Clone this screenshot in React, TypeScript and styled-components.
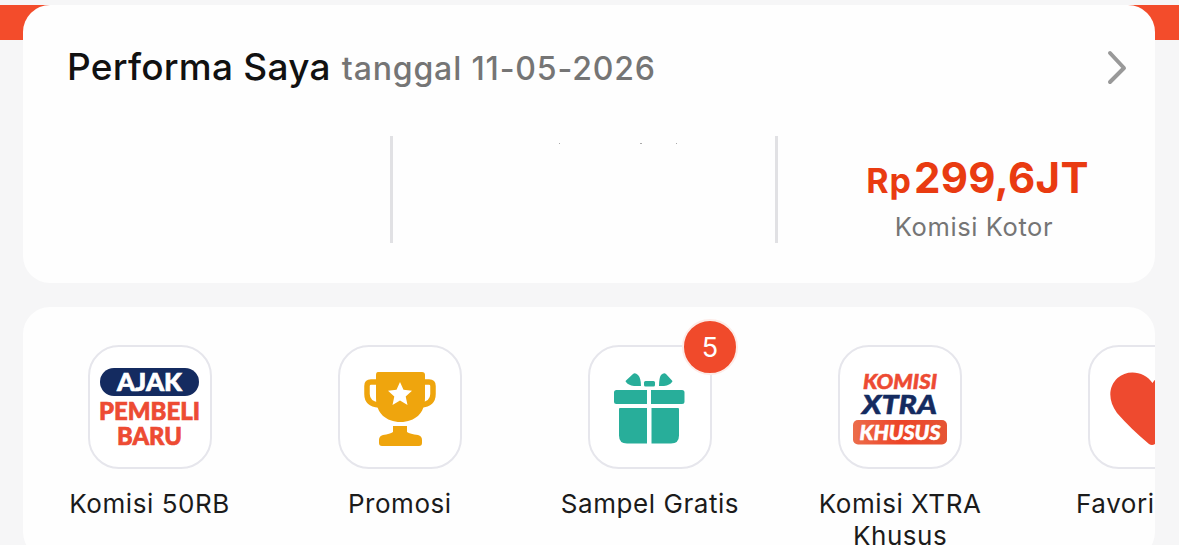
import { FC, ReactNode } from 'react';
import styled, { createGlobalStyle } from 'styled-components';

const GlobalStyle = createGlobalStyle`
  * {
    box-sizing: border-box;
  }
  body {
    margin: 0;
    background: #f6f6f7;
    font-family: Inter, 'Liberation Sans', sans-serif;
    overflow: hidden;
  }
`;

const Page = styled.main`
  height: 545px;
  padding: 5px 24px 0 23px;
  overflow: hidden;
  background: linear-gradient(
    #f6f6f7 5px,
    #f34c2b 5px,
    #f34c2b 40px,
    #f6f6f7 40px
  );
`;

const Card = styled.section`
  background: #fefefe;
  border-radius: 27px;
  overflow: hidden;
`;

const PerformanceCard = styled(Card)`
  height: 278px;
  margin-bottom: 24px;
`;

const MenuCard = styled(Card)`
  height: 252px;
  display: flex;
  padding: 38px 0 0 1.5px;
`;

const Header = styled.header`
  display: flex;
  align-items: center;
  justify-content: space-between;
  height: 124px;
  padding: 0 28px 0 44px;
`;

const Heading = styled.div`
  display: flex;
  align-items: baseline;
  white-space: nowrap;
`;

const Title = styled.h1`
  margin: 0;
  color: #111;
  font-size: 37px;
  font-weight: 500;
  line-height: 48px;
  letter-spacing: 0.25px;
`;

const DateLabel = styled.span`
  margin-left: 11px;
  color: #757575;
  font-size: 32px;
  font-weight: 450;
  letter-spacing: 0.85px;
`;

const Chevron = styled.svg`
  width: 20px;
  height: 36px;
`;

const Stats = styled.div`
  display: flex;
  height: 114px;
  padding-top: 2px;
`;

const Stat = styled.div<{ $width: number; $inset?: number }>`
  flex: 0 0 ${(props) => props.$width}px;
  display: flex;
  flex-direction: column;
  align-items: center;
  padding-top: 18px;
  padding-left: ${(props) => props.$inset ?? 0}px;
`;

const Divider = styled.div`
  width: 3px;
  height: 107px;
  margin-top: 5px;
  background: #e1e1e4;
`;

const Specks = styled.svg`
  width: 150px;
  height: 4px;
  margin: -7px 0 0 50px;
`;

const Amount = styled.div`
  display: flex;
  align-items: baseline;
  margin-left: 7px;
  color: #e93b11;
  font-size: 42px;
  font-weight: 700;
  line-height: 58px;
  letter-spacing: 0.35px;
`;

const Currency = styled.span`
  margin-right: 2px;
  font-size: 34px;
  letter-spacing: 1px;
`;

const StatLabel = styled.div`
  margin-top: 1px;
  color: #757575;
  font-size: 25.5px;
  line-height: 32px;
  letter-spacing: 0.6px;
`;

const MenuItem = styled.div`
  flex: 0 0 250.2px;
  display: flex;
  flex-direction: column;
  align-items: center;
`;

const Tile = styled.div`
  position: relative;
  width: 124px;
  height: 124px;
  border: 2px solid #e6e6ec;
  border-radius: 31px;
  background: #fff;

  > svg {
    display: block;
    width: 120px;
    height: 120px;
  }
`;

const Badge = styled.span`
  position: absolute;
  top: -28px;
  right: -28px;
  width: 56px;
  height: 56px;
  border: 2px solid #fdebe7;
  border-radius: 50%;
  background: #f04a2b;
  color: #fff;
  font-size: 27px;
  line-height: 53px;
  text-align: center;
`;

const ItemLabel = styled.div`
  width: 190px;
  margin-top: 19px;
  color: #1b1b1b;
  font-size: 26px;
  line-height: 32px;
  letter-spacing: 0.55px;
  text-align: center;
`;

const InviteIcon = () => (
  <svg viewBox="0 0 120 120" fontFamily="Lato, sans-serif" fontWeight="900" strokeWidth="0.7">
    <rect x="10" y="21" width="99" height="28" rx="14" fill="#142b60" />
    <text x="27" y="44" fontSize="25" fill="#fff" stroke="#fff" textLength="65" lengthAdjust="spacingAndGlyphs">AJAK</text>
    <text x="9" y="72.5" fontSize="25" fill="#ed4b33" stroke="#ed4b33" textLength="101" lengthAdjust="spacingAndGlyphs">PEMBELI</text>
    <text x="27" y="97.5" fontSize="25" fill="#ed4b33" stroke="#ed4b33" textLength="65" lengthAdjust="spacingAndGlyphs">BARU</text>
  </svg>
);

const TrophyIcon = () => (
  <svg viewBox="0 0 120 120" fill="#efa50d">
    <path
      d="M38 35H31Q27 35 27 39V47Q27 57 39 58M82 35H89Q93 35 93 39V47Q93 57 81 58"
      fill="none"
      stroke="#efa50d"
      strokeWidth="5.5"
    />
    <path d="M38 25H82Q85 25 85 28V51C85 66 75 75 60.5 75S36 66 36 51V28Q36 25 38 25Z" />
    <path
      d="M60 35L63.5 42.8L72 43.7L65.7 49.4L67.5 58L60 53.6L52.5 58L54.3 49.4L48 43.7L56.5 42.8Z"
      fill="#fff"
    />
    <path d="M53 79H67V85Q70 87 78 88Q82 89 82 93V96Q82 99 79 99H42Q39 99 39 96V93Q39 89 43 88Q50 87 53 85Z" />
  </svg>
);

const GiftIcon = () => (
  <svg viewBox="0 0 120 120" fill="#28ae9a">
    <path d="M36 33.5L43 27Q45 25 48 28Q51 31 51 39H44Q38 38 36 35Q35 34 36 33.5ZM82 33.5L76 27Q74 25 71 28Q69 31 69 39H74Q80 38 82 35Q83 34 82 33.5Z" />
    <rect x="54" y="34" width="11" height="5.5" rx="1.5" />
    <path d="M26.5 43H57V57H26.5Q24 57 24 54.5V45.5Q24 43 26.5 43ZM61 43H92Q94.5 43 94.5 45.5V54.5Q94.5 57 92 57H61Z" />
    <path d="M30 61H57V96.5H37Q29 96.5 29 88.5V62Q29 61 30 61ZM61.5 61H88Q89 61 89 62V88.5Q89 96.5 81 96.5H61.5Z" />
  </svg>
);

const XtraIcon = () => (
  <svg viewBox="0 0 120 120" fontFamily="Lato, sans-serif" fontWeight="900" fontStyle="italic" strokeWidth="0.5">
    <defs>
      <linearGradient id="khusus">
        <stop offset="0" stopColor="#ec6d4b" />
        <stop offset="0.5" stopColor="#ed4427" />
        <stop offset="1" stopColor="#e55535" />
      </linearGradient>
    </defs>
    <text x="23" y="41.5" fontSize="20" fill="#ed4b33" stroke="#ed4b33" textLength="74" lengthAdjust="spacingAndGlyphs">KOMISI</text>
    <text x="22" y="67" fontSize="27" fill="#142b60" stroke="#142b60" textLength="75" lengthAdjust="spacingAndGlyphs">XTRA</text>
    <rect x="13" y="73" width="94" height="24.5" rx="5" fill="url(#khusus)" />
    <text x="19.5" y="92.5" fontSize="20.5" fill="#fff" stroke="#fff" textLength="81" lengthAdjust="spacingAndGlyphs">KHUSUS</text>
  </svg>
);

const HeartIcon = () => (
  <svg viewBox="0 0 120 120" fill="#ee4a2f">
    <path d="M62.5 36C55 24 37 22 27.5 31C18 40 18 54 27 66Q41 82 59 97Q62 99 65 97Q83 82 97 66C106 54 106 40 97 31C87 22 70 24 62.5 36Z" />
  </svg>
);

interface iShortcutProps {
  label: string;
  badge?: number;
  children: ReactNode;
}

const Shortcut: FC<iShortcutProps> = ({ label, badge, children }) => (
  <MenuItem>
    <Tile>
      {children}
      {badge && <Badge>{badge}</Badge>}
    </Tile>
    <ItemLabel>{label}</ItemLabel>
  </MenuItem>
);

const App: FC = () => (
  <>
    <GlobalStyle />
    <Page>
      <PerformanceCard>
        <Header>
          <Heading>
            <Title>Performa Saya</Title>
            <DateLabel>tanggal 11-05-2026</DateLabel>
          </Heading>
          <Chevron viewBox="0 0 20 36">
            <path
              d="M3 4L17 19L3 33"
              fill="none"
              stroke="#999"
              strokeWidth="4"
              strokeLinecap="round"
              strokeLinejoin="round"
            />
          </Chevron>
        </Header>
        <Stats>
          <Stat $width={367} />
          <Divider />
          <Stat $width={382}>
            <Specks viewBox="0 0 150 4" fill="#aaa">
              <rect x="25" y="1" width="1" height="1" />
              <rect x="106" y="1" width="2" height="1" />
              <rect x="142" y="1" width="1" height="1" />
            </Specks>
          </Stat>
          <Divider />
          <Stat $width={377} $inset={15}>
            <Amount>
              <Currency>Rp</Currency>299,6JT
            </Amount>
            <StatLabel>Komisi Kotor</StatLabel>
          </Stat>
        </Stats>
      </PerformanceCard>
      <MenuCard>
        <Shortcut label="Komisi 50RB">
          <InviteIcon />
        </Shortcut>
        <Shortcut label="Promosi">
          <TrophyIcon />
        </Shortcut>
        <Shortcut label="Sampel Gratis" badge={5}>
          <GiftIcon />
        </Shortcut>
        <Shortcut label="Komisi XTRA Khusus">
          <XtraIcon />
        </Shortcut>
        <Shortcut label="Favori Saya">
          <HeartIcon />
        </Shortcut>
      </MenuCard>
    </Page>
  </>
);

export default App;
